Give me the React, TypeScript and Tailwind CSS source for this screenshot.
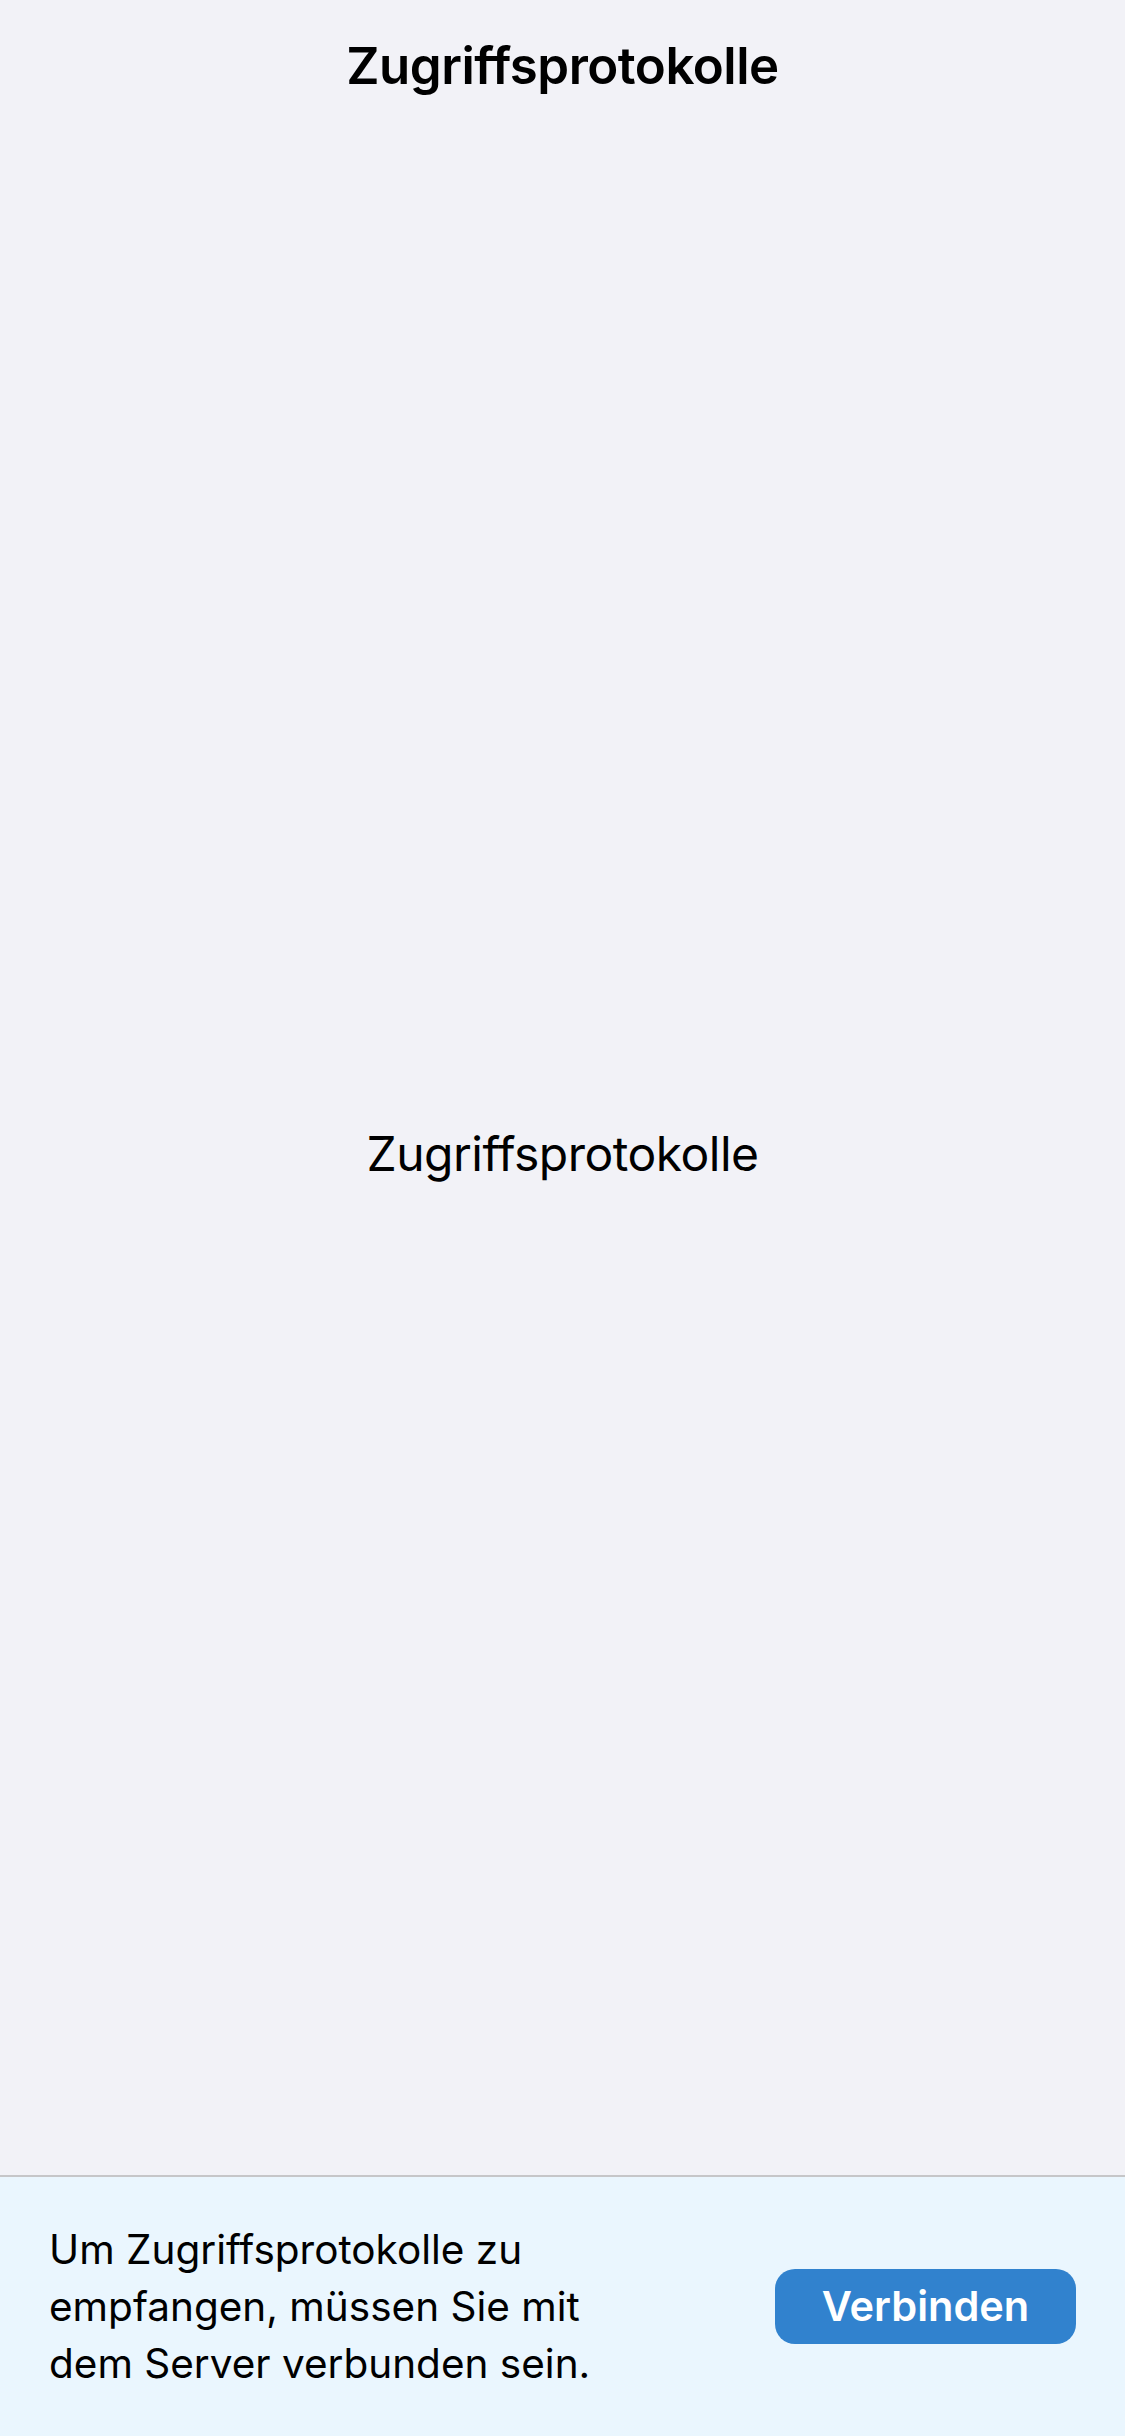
export default function App() {
  return (
    <div
      className="flex h-[2436px] w-full flex-col bg-[#f2f2f7] text-black"
      style={{ fontFamily: 'Inter, "Noto Sans", sans-serif' }}
    >
      <header className="flex h-[132px] items-center justify-center">
        <h1 className="text-[51px] font-semibold tracking-[-0.5px]">Zugriffsprotokolle</h1>
      </header>

      <main className="flex flex-1 items-center justify-center">
        <p className="text-[48px] tracking-[-0.5px]">Zugriffsprotokolle</p>
      </main>

      <footer className="flex h-[261px] items-center justify-between border-t-2 border-[#c6c6c8] bg-[#eaf6fe] pl-[49px] pr-[49px]">
        <p className="w-[600px] text-[40.5px] leading-[57px]">
          Um Zugriffsprotokolle zu empfangen, müssen Sie mit dem Server verbunden sein.
        </p>
        <button className="flex h-[75px] w-[301px] items-center justify-center rounded-[20px] bg-[#3182ce] text-[41.5px] font-semibold text-white">
          Verbinden
        </button>
      </footer>
    </div>
  );
}
